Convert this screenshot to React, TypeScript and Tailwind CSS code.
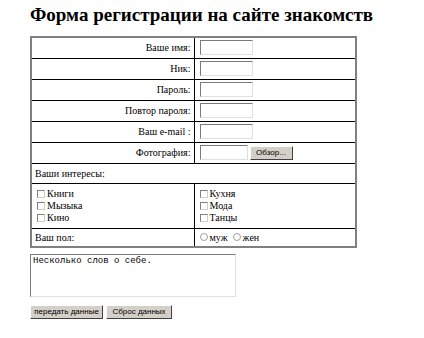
import React from 'react';

const inputCls =
  'block h-[15px] bg-white border border-t-[#7a7a7a] border-l-[#7a7a7a] border-r-[#e0e0e0] border-b-[#e0e0e0]';

const btnCls =
  "h-[14px] px-[3px] bg-[#d4d0c8] text-[8px] leading-none text-black border border-t-white border-l-white border-r-[#404040] border-b-[#404040] font-['Liberation_Sans']";

const Check: React.FC<{ label: string }> = ({ label }) => (
  <div className="flex items-center h-[12px]">
    <span className="inline-block w-[8px] h-[8px] border border-t-[#808080] border-l-[#808080] border-r-[#d0d0d0] border-b-[#d0d0d0] bg-white mr-[2px]" />
    <span>{label}</span>
  </div>
);

const Radio: React.FC<{ label: string }> = ({ label }) => (
  <span className="inline-flex items-center mr-[5px]">
    <span className="inline-block w-[8px] h-[8px] rounded-full border border-[#a0a0a0] bg-white mr-[2px]" />
    <span>{label}</span>
  </span>
);

const rows = ['Ваше имя:', 'Ник:', 'Пароль:', 'Повтор пароля:', 'Ваш e-mail :'];

export default function App() {
  return (
    <div className="w-[424px] h-[338px] bg-white text-black pl-[30px] pt-[4px]">
      <h1 className="font-['Liberation_Serif'] text-[19px] font-bold leading-[22px] mb-[10px]">
        Форма регистрации на сайте знакомств
      </h1>

      <table className="font-['Liberation_Serif'] w-[327px] border-collapse border-2 border-[#808080] text-[10px]">
        <tbody>
          {rows.map((r) => (
            <tr key={r} className="h-[21px]">
              <td className="w-[163px] border border-black text-right pr-[3px]">{r}</td>
              <td className="border border-black pl-[5px]">
                <span className={inputCls + ' w-[53px]'} />
              </td>
            </tr>
          ))}
          <tr className="h-[21px]">
            <td className="border border-black text-right pr-[3px]">Фотография:</td>
            <td className="border border-black pl-[5px]">
              <div className="flex items-center gap-[2px]">
                <span className={inputCls + ' w-[48px]'} />
                <button className={btnCls + ' w-[43px]'}>Обзор...</button>
              </div>
            </td>
          </tr>
          <tr className="h-[20px]">
            <td colSpan={2} className="border border-black pl-[3px]">Ваши интересы:</td>
          </tr>
          <tr className="h-[45px]">
            <td className="border border-black pl-[5px] align-middle">
              <Check label="Книги" />
              <Check label="Мызыка" />
              <Check label="Кино" />
            </td>
            <td className="border border-black pl-[5px] align-middle">
              <Check label="Кухня" />
              <Check label="Мода" />
              <Check label="Танцы" />
            </td>
          </tr>
          <tr className="h-[19px]">
            <td className="border border-black pl-[3px]">Ваш пол:</td>
            <td className="border border-black pl-[5px]">
              <Radio label="муж" />
              <Radio label="жен" />
            </td>
          </tr>
        </tbody>
      </table>

      <div className="mt-[6px] w-[206px] h-[43px] border border-t-[#7a7a7a] border-l-[#7a7a7a] border-r-[#e0e0e0] border-b-[#e0e0e0] px-[2px] py-[1px] text-[9px] leading-[11px] font-['Liberation_Mono']">
        Несколько слов о себе.
      </div>

      <div className="mt-[8px] flex gap-[3px]">
        <button className={btnCls + ' w-[73px]'}>передать данные</button>
        <button className={btnCls + ' w-[66px]'}>Сброс данных</button>
      </div>
    </div>
  );
}
